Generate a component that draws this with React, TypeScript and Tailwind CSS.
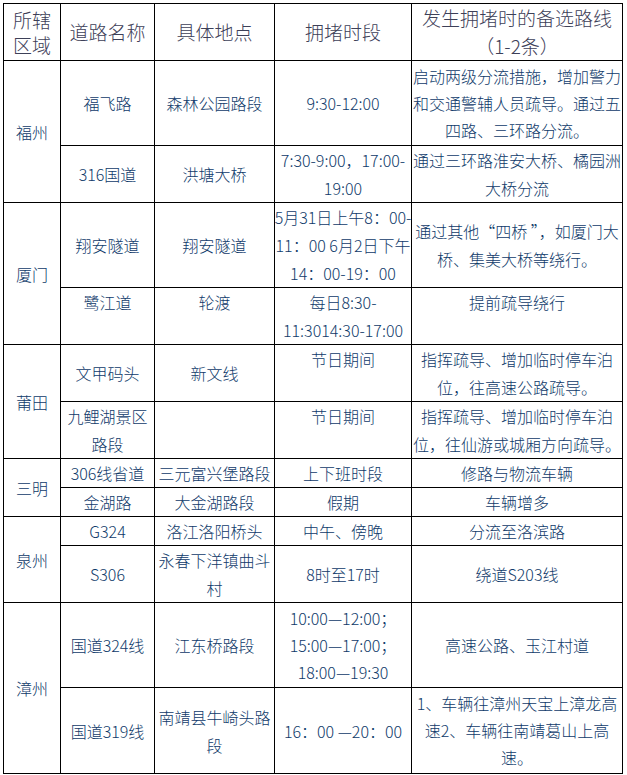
import React from "react";

type CellProps = {
  lines: string[];
  top?: boolean;
  span?: boolean;
  head?: boolean;
  lead?: "l25" | "l27" | "l28";
};

function Cell({ lines, top, span, head, lead = "l28" }: CellProps) {
  const align = top ? "items-start" : "items-center";
  const size = head ? "text-[19px] text-[#3d4058]" : "text-[16px] text-[#0f3a6a]";
  const leading = lead === "l25" ? "leading-[25px]" : lead === "l27" ? "leading-[27px]" : "leading-[28px]";
  const rs = span ? "row-span-2" : "";
  return (
    <div className={`bg-white flex ${align} justify-center text-center whitespace-nowrap overflow-visible font-light ${size} ${leading} ${rs}`}>
      <div>
        {lines.map((l, i) => (
          <div key={i}>{l === "" ? "\u00a0" : l}</div>
        ))}
      </div>
    </div>
  );
}

export default function App() {
  return (
    <div
      className="bg-white w-[627px] h-[775px] pt-[3px] pl-[3px]"
      style={{ fontFamily: '"Noto Sans CJK SC", "Noto Sans", sans-serif' }}
    >
      <div className="grid w-fit bg-black p-px gap-px grid-cols-[56px_93px_119px_136px_210px] grid-rows-[56px_84px_56px_84px_56px_56px_56px_28px_28px_28px_56px_84px_85px]">
        {/* header */}
        <Cell head lead="l25" lines={["所辖", "区域"]} />
        <Cell head lines={["道路名称"]} />
        <Cell head lines={["具体地点"]} />
        <Cell head lines={["拥堵时段"]} />
        <Cell head lines={["发生拥堵时的备选路线", "（1-2条）"]} />

        {/* 福州 */}
        <Cell span lines={["福州"]} />
        <Cell lines={["福飞路"]} />
        <Cell lines={["森林公园路段"]} />
        <Cell lines={["9:30-12:00"]} />
        <Cell lead="l27" lines={["启动两级分流措施，增加警力", "和交通警辅人员疏导。通过五", "四路、三环路分流。"]} />
        <Cell lines={["316国道"]} />
        <Cell lines={["洪塘大桥"]} />
        <Cell lines={["7:30-9:00，17:00-", "19:00"]} />
        <Cell lines={["通过三环路淮安大桥、橘园洲", "大桥分流"]} />

        {/* 厦门 */}
        <Cell span lines={["厦门"]} />
        <Cell lines={["翔安隧道"]} />
        <Cell lines={["翔安隧道"]} />
        <Cell lines={["5月31日上午8：00-", "11：00 6月2日下午", "14：00-19：00"]} />
        <Cell lines={["通过其他“四桥 ”，如厦门大", "桥、集美大桥等绕行。"]} />
        <Cell top lines={["鹭江道"]} />
        <Cell top lines={["轮渡"]} />
        <Cell lines={["每日8:30-", "11:3014:30-17:00"]} />
        <Cell top lines={["提前疏导绕行"]} />

        {/* 莆田 */}
        <Cell span lines={["莆田"]} />
        <Cell lines={["文甲码头"]} />
        <Cell lines={["新文线"]} />
        <Cell top lines={["节日期间"]} />
        <Cell lines={["指挥疏导、增加临时停车泊", "位，往高速公路疏导。"]} />
        <Cell lines={["九鲤湖景区", "路段"]} />
        <Cell lines={[""]} />
        <Cell top lines={["节日期间"]} />
        <Cell lines={["指挥疏导、增加临时停车泊", "位，往仙游或城厢方向疏导。"]} />

        {/* 三明 */}
        <Cell span lines={["三明"]} />
        <Cell lines={["306线省道"]} />
        <Cell lines={["三元富兴堡路段"]} />
        <Cell lines={["上下班时段"]} />
        <Cell lines={["修路与物流车辆"]} />
        <Cell lines={["金湖路"]} />
        <Cell lines={["大金湖路段"]} />
        <Cell lines={["假期"]} />
        <Cell lines={["车辆增多"]} />

        {/* 泉州 */}
        <Cell span lines={["泉州"]} />
        <Cell lines={["G324"]} />
        <Cell lines={["洛江洛阳桥头"]} />
        <Cell lines={["中午、傍晚"]} />
        <Cell lines={["分流至洛滨路"]} />
        <Cell lines={["S306"]} />
        <Cell lines={["永春下洋镇曲斗", "村"]} />
        <Cell lines={["8时至17时"]} />
        <Cell lines={["绕道S203线"]} />

        {/* 漳州 */}
        <Cell span lines={["漳州"]} />
        <Cell lines={["国道324线"]} />
        <Cell lines={["江东桥路段"]} />
        <Cell lead="l27" lines={["10:00—12:00；", "15:00—17:00；", "18:00—19:30"]} />
        <Cell lines={["高速公路、玉江村道"]} />
        <Cell lines={["国道319线"]} />
        <Cell lines={["南靖县牛崎头路", "段"]} />
        <Cell lines={["16：00 —20：00"]} />
        <Cell lead="l27" lines={["1、车辆往漳州天宝上漳龙高", "速2、车辆往南靖葛山上高", "速。"]} />
      </div>
    </div>
  );
}
